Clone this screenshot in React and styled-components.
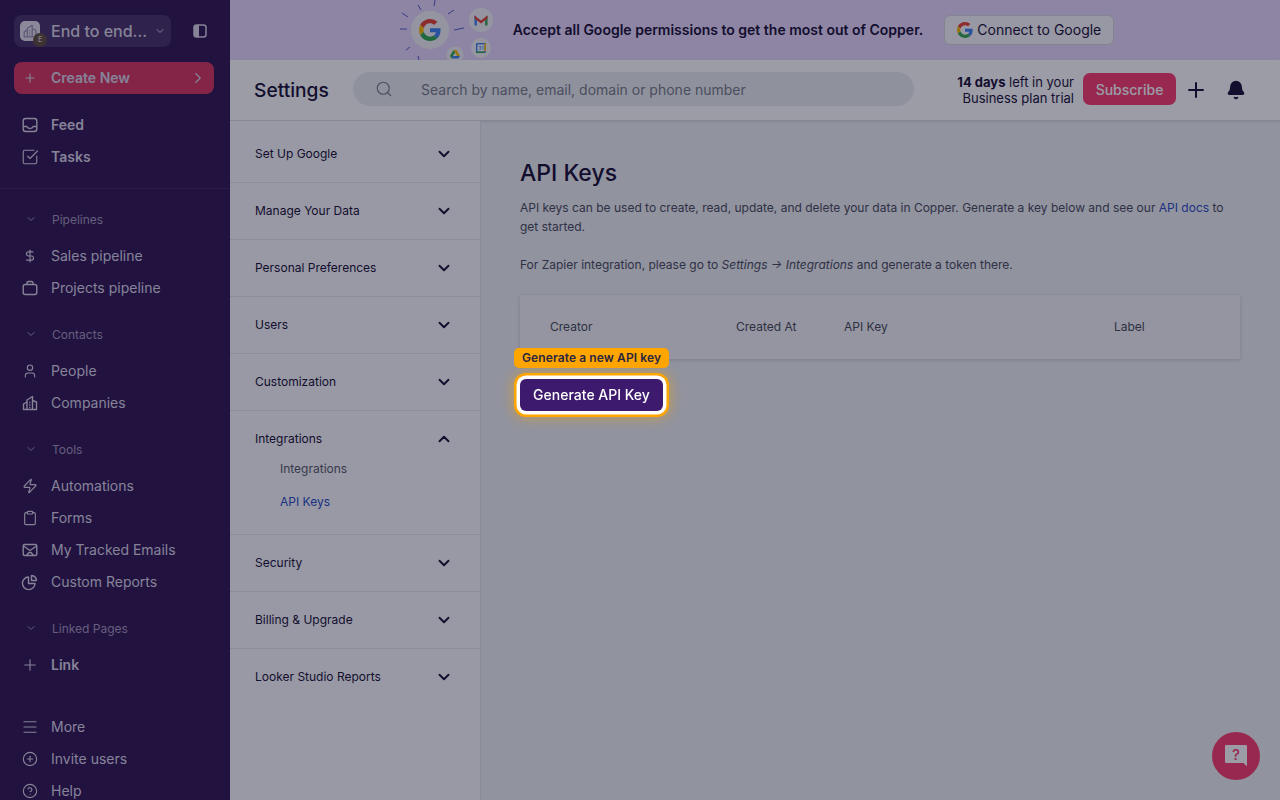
import styled, { createGlobalStyle } from "styled-components";
import {
  Bell,
  ChevronDown,
  ChevronRight,
  ChevronUp,
  CircleHelp,
  CirclePlus,
  Clipboard,
  DollarSign,
  Menu,
  Plus,
  Search,
  SquareCheckBig,
  User,
  Zap,
} from "lucide-react";

const GlobalStyle = createGlobalStyle`
  html, body {
    margin: 0;
    padding: 0;
    height: 100%;
    overflow: hidden;
    font-family: Inter, "Liberation Sans", sans-serif;
  }
  * {
    box-sizing: border-box;
  }
`;

const Page = styled.div`
  display: flex;
  width: 100%;
  height: 100vh;
  overflow: hidden;
  background: #eef0f2;
`;

const Overlay = styled.div`
  position: fixed;
  inset: 0;
  z-index: 10;
  background: rgba(5, 8, 32, 0.4);
`;

const Sidebar = styled.aside`
  flex: 0 0 230px;
  height: 100%;
  overflow: hidden;
  padding-top: 15px;
  background: #351a55;
  color: #dcd6e6;
`;

const OrgRow = styled.div`
  display: flex;
  align-items: center;
  justify-content: space-between;
  padding: 0 23px 0 14px;
`;

const OrgButton = styled.div`
  position: relative;
  display: flex;
  align-items: center;
  width: 157px;
  height: 32px;
  padding: 0 5px 0 6px;
  border-radius: 8px;
  background: #4c3569;
  font-size: 16px;
  font-weight: 500;
`;

const OrgLogo = styled.div`
  display: flex;
  align-items: center;
  justify-content: center;
  flex: 0 0 20px;
  height: 20px;
  margin-right: 11px;
  border-radius: 5px;
  background: #e4e0ea;
  color: #9c8fb0;
`;

const OrgBadge = styled.div`
  position: absolute;
  left: 19px;
  top: 18px;
  width: 14px;
  height: 14px;
  border-radius: 50%;
  background: #62503f;
  color: #d8d0c8;
  font-size: 7px;
  line-height: 14px;
  text-align: center;
`;

const OrgName = styled.span`
  flex: 1;
  white-space: nowrap;
`;

const CreateButton = styled.div`
  display: flex;
  align-items: center;
  height: 32px;
  margin: 15px 16px 0 14px;
  padding: 0 7px 1px 9px;
  border-radius: 8px;
  background: #d93a62;
  font-size: 14px;
  font-weight: 600;
  svg:first-child {
    margin-right: 14px;
  }
  svg:last-child {
    margin-left: auto;
  }
`;

const NavGroup = styled.div`
  margin-top: ${(p) => p.$top || 0}px;
`;

const Divider = styled.div`
  height: 1px;
  margin-top: 15px;
  background: #44296a;
`;

const NavItem = styled.div`
  display: flex;
  align-items: center;
  gap: 12px;
  height: 32px;
  padding: 0 0 2px 21px;
  font-size: 14px;
  font-weight: ${(p) => (p.$bold ? 600 : 400)};
  white-space: nowrap;
`;

const IconSlot = styled.span`
  display: flex;
  align-items: center;
  justify-content: center;
  flex: 0 0 18px;
  height: 18px;
  margin-top: 1px;
`;

const SectionHead = styled.div`
  display: flex;
  align-items: center;
  gap: 15px;
  height: 32px;
  margin-bottom: 5px;
  padding-left: 25px;
  color: #a698ba;
  font-size: 12px;
`;

const Main = styled.div`
  flex: 1;
  display: flex;
  flex-direction: column;
  min-width: 0;
`;

const Banner = styled.div`
  display: flex;
  align-items: center;
  justify-content: center;
  flex: 0 0 60px;
  padding-left: 4px;
  background: #e8d9fa;
  color: #1d1238;
  font-size: 14px;
  font-weight: 600;
  overflow: hidden;
`;

const BannerArt = styled.svg`
  flex: 0 0 113px;
  display: block;
`;

const BannerText = styled.span`
  margin-bottom: 2px;
`;

const ConnectButton = styled.div`
  display: flex;
  align-items: center;
  gap: 4px;
  height: 30px;
  margin-left: 21px;
  padding: 0 12px 1px;
  border: 1px solid #d8d8de;
  border-radius: 6px;
  background: #f9f9fb;
  font-weight: 400;
`;

const Header = styled.header`
  display: flex;
  align-items: center;
  flex: 0 0 61px;
  padding: 0 34px 2px 24px;
  background: #ffffff;
  border-bottom: 1px solid #dcdde2;
  box-shadow: 0 1px 3px rgba(0, 0, 0, 0.08);
  color: #1d1238;
`;

const Title = styled.h2`
  flex: 0 0 99px;
  margin: 2px 0 0;
  font-size: 19.2px;
  font-weight: 500;
`;

const SearchBox = styled.div`
  display: flex;
  align-items: center;
  flex: 0 0 561px;
  height: 34px;
  padding-left: 22px;
  border-radius: 17px;
  background: #eceef1;
  color: #7a7d88;
  font-size: 14px;
  svg {
    margin-right: 28px;
  }
`;

const Trial = styled.div`
  flex: 1;
  margin-top: 2px;
  font-size: 13px;
  line-height: 16px;
  text-align: right;
  b {
    font-weight: 700;
  }
`;

const SubscribeButton = styled.div`
  display: flex;
  align-items: center;
  justify-content: center;
  flex: 0 0 93px;
  height: 32px;
  margin-left: 9px;
  border-radius: 7px;
  background: #fa3f70;
  color: #ffffff;
  font-size: 14px;
  font-weight: 500;
`;

const HeaderIcons = styled.div`
  display: flex;
  align-items: center;
  gap: 18px;
  margin: 2px 0 0 8px;
`;

const Body = styled.div`
  flex: 1;
  display: flex;
  min-height: 0;
`;

const SettingsNav = styled.nav`
  flex: 0 0 251px;
  padding-top: 5px;
  background: #fafafc;
  border-right: 1px solid #e0e1e6;
  color: #1d1238;
`;

const Section = styled.div`
  padding: 0 27px 0 25px;
  border-bottom: ${(p) => (p.$last ? "none" : "1px solid #e6e7ec")};
`;

const SectionRow = styled.div`
  display: flex;
  align-items: center;
  justify-content: space-between;
  height: 56px;
  padding-bottom: 2px;
  font-size: 12px;
  svg {
    margin-top: 2px;
  }
`;

const SubList = styled.div`
  display: flex;
  flex-direction: column;
  gap: 14px;
  margin-top: -8px;
  padding: 0 0 23px 25px;
`;

const SubItem = styled.div`
  height: 19px;
  line-height: 19px;
  font-size: 12px;
  color: ${(p) => (p.$active ? "#2f4fc4" : "#5a5c6b")};
`;

const Content = styled.main`
  flex: 1;
  padding: 36px 40px 0 39px;
`;

const Heading = styled.h1`
  margin: 0 0 9px;
  font-size: 23px;
  line-height: 32px;
  font-weight: 500;
  color: #1d1238;
`;

const Para = styled.p`
  margin: 0 0 19px;
  font-size: 12px;
  line-height: 19px;
  color: #4d4d60;
  a {
    color: #2f4fc4;
  }
`;

const TableCard = styled.div`
  display: grid;
  grid-template-columns: 186px 108px 270px 1fr;
  align-items: center;
  height: 64px;
  margin-top: 21px;
  padding: 0 0 2px 30px;
  background: #f3f4f6;
  box-shadow: 0 1px 4px rgba(0, 0, 0, 0.15);
  color: #4c4e5a;
  font-size: 12px;
`;

const ButtonSpot = styled.div`
  position: relative;
  width: 143px;
  margin-top: 20px;
`;

const Tip = styled.div`
  position: absolute;
  left: -6px;
  top: -31px;
  z-index: 20;
  height: 20px;
  padding: 0 8px;
  border-radius: 5px;
  background: #ffa500;
  color: #2b2640;
  font-size: 12px;
  font-weight: 600;
  letter-spacing: 0.1px;
  line-height: 20px;
  white-space: nowrap;
`;

const GenerateButton = styled.div`
  position: relative;
  z-index: 20;
  display: flex;
  align-items: center;
  justify-content: center;
  height: 32px;
  padding-bottom: 1px;
  border-radius: 6px;
  background: #3e1a6e;
  color: #ffffff;
  font-size: 14px;
  font-weight: 500;
  box-shadow: 0 0 0 3.5px #ffffff, 0 0 0 6px #ffa500, 0 0 12px 8px rgba(255, 165, 0, 0.4);
`;

const HelpBubble = styled.div`
  position: fixed;
  right: 20px;
  bottom: 20px;
  display: flex;
  align-items: center;
  justify-content: center;
  width: 48px;
  height: 48px;
  border-radius: 50%;
  background: #fa3f70;
`;

const gPaths = (
  <>
    <path fill="#EA4335" d="M24 9.5c3.54 0 6.71 1.22 9.21 3.6l6.85-6.85C35.9 2.38 30.47 0 24 0 14.62 0 6.51 5.38 2.56 13.22l7.98 6.19C12.43 13.72 17.74 9.5 24 9.5z" />
    <path fill="#4285F4" d="M46.98 24.55c0-1.57-.15-3.09-.38-4.55H24v9.02h12.94c-.58 2.96-2.26 5.48-4.78 7.18l7.73 6c4.51-4.18 7.09-10.36 7.09-17.65z" />
    <path fill="#FBBC05" d="M10.53 28.59c-.48-1.45-.76-2.99-.76-4.59s.27-3.14.76-4.59l-7.98-6.19C.92 16.46 0 20.12 0 24c0 3.88.92 7.54 2.56 10.78l7.97-6.19z" />
    <path fill="#34A853" d="M24 48c6.48 0 11.93-2.13 15.89-5.81l-7.73-6c-2.15 1.45-4.92 2.3-8.16 2.3-6.26 0-11.57-4.22-13.47-9.91l-7.98 6.19C6.51 42.62 14.62 48 24 48z" />
  </>
);

const rays = [
  [35, 0, 34, 6],
  [18, 5, 21, 10],
  [2, 13, 8, 17],
  [0, 29, 7, 29],
  [6, 50, 10, 47],
  [18, 56, 19, 60],
  [48, 14, 54, 10],
  [54, 30, 64, 28],
];

const BannerIllustration = () => (
  <BannerArt width="113" height="60" viewBox="0 0 113 60">
    {rays.map(([x1, y1, x2, y2], i) => (
      <line key={i} x1={x1} y1={y1} x2={x2} y2={y2} stroke="#5560c8" strokeWidth="1" />
    ))}
    <circle cx="30" cy="30" r="19" fill="#f4f4f6" />
    <svg x="19" y="19" width="22" height="22" viewBox="0 0 48 48">
      {gPaths}
    </svg>
    <circle cx="81" cy="20" r="12" fill="#f4f4f6" />
    <path d="M74.500 25.500v-10l2.400 1.800v8.200z" fill="#4285F4" />
    <path d="M87.500 25.500v-10l-2.400 1.800v8.200z" fill="#34A853" />
    <path d="M74.500 15.500l6.500 5 6.500-5v3l-6.500 5-6.500-5z" fill="#EA4335" />
    <circle cx="81" cy="48" r="10" fill="#f4f4f6" />
    <rect x="76" y="43" width="10" height="10" rx="1" fill="#4285F4" />
    <rect x="77.500" y="44.500" width="7" height="7" fill="#ffffff" />
    <text x="81" y="50" textAnchor="middle" fontSize="5" fontFamily="Inter, sans-serif" fill="#4285F4">31</text>
    <path d="M84.500 43H86v8.500h-1.500z" fill="#FBBC05" />
    <path d="M76 51.500h8.500V53H76z" fill="#34A853" />
    <circle cx="55" cy="55" r="8.500" fill="#f4f4f6" />
    <path d="M53.500 50h3l3.500 6h-3z" fill="#FBBC05" />
    <path d="M53.500 50L50 56l1.500 2.500L55 52.500z" fill="#34A853" />
    <path d="M51.500 58.500h7l1.500-2.500h-7z" fill="#4285F4" />
  </BannerArt>
);

// lucide has no close match for these, so they are drawn by hand
const FeedIcon = () => (
  <svg width="18" height="18" viewBox="0 0 18 18" fill="none" stroke="currentColor" strokeWidth="1.4">
    <rect x="2.200" y="2.500" width="13.600" height="13" rx="2.500" />
    <path d="M2.200 10.500h3.600c.6 1.400 1.700 2 3.200 2s2.600-.6 3.200-2h3.600" />
  </svg>
);

const CaseIcon = () => (
  <svg width="18" height="18" viewBox="0 0 18 18" fill="none" stroke="currentColor" strokeWidth="1.4" strokeLinejoin="round">
    <rect x="2.200" y="5.500" width="13.600" height="10" rx="2" />
    <path d="M6 5.500V4a1.500 1.500 0 0 1 1.500-1.500h3A1.500 1.500 0 0 1 12 4v1.500" />
  </svg>
);

const CompanyIcon = ({ size = 18 }) => (
  <svg width={size} height={size} viewBox="0 0 18 18" fill="none" stroke="currentColor" strokeWidth="1.4" strokeLinejoin="round">
    <path d="M6 15.500V6L11.500 2.500v13" />
    <path d="M6 8L2.500 10v5.500h13V8l-4-1.500" />
    <path d="M8.200 8.500h1.200M8.200 11h1.200M8.200 13.500h1.200" />
  </svg>
);

const TrackedIcon = () => (
  <svg width="18" height="18" viewBox="0 0 18 18" fill="none" stroke="currentColor" strokeWidth="1.4" strokeLinejoin="round">
    <rect x="2.200" y="3.500" width="13.600" height="11" rx="1.500" />
    <path d="M2.500 5L9 9.500 15.500 5" />
    <path d="M5.500 14.500L8 11.500h2l2.500 3" />
  </svg>
);

const PieIcon = () => (
  <svg width="18" height="18" viewBox="0 0 18 18" fill="none" stroke="currentColor" strokeWidth="1.4" strokeLinejoin="round">
    <path d="M7.500 4a6.300 6.300 0 1 0 6.500 6.500H7.500z" />
    <path d="M10.500 2.500a5.500 5.500 0 0 1 5 5h-5z" />
  </svg>
);

const PanelIcon = () => (
  <svg width="14" height="14" viewBox="0 0 14 14">
    <rect x="1" y="1" width="12" height="12" rx="2.500" fill="none" stroke="currentColor" strokeWidth="1.500" />
    <path d="M3.500 1H6v12H3.500A2.500 2.500 0 0 1 1 10.500v-7A2.500 2.500 0 0 1 3.500 1z" fill="currentColor" />
  </svg>
);

const ChatIcon = () => (
  <svg width="24" height="24" viewBox="0 0 24 24">
    <path d="M1 2a1 1 0 0 1 1-1h20a1 1 0 0 1 1 1v20.500l-3.500-3.500H2a1 1 0 0 1-1-1z" fill="#ffffff" />
    <text x="12" y="15.500" textAnchor="middle" fontSize="15" fontWeight="500" fontFamily="Inter, sans-serif" fill="#fa3f70">?</text>
  </svg>
);

const settingsSections = [
  "Set Up Google",
  "Manage Your Data",
  "Personal Preferences",
  "Users",
  "Customization",
];

const lowerSections = ["Security", "Billing & Upgrade"];

const SideLink = ({ icon, bold, children }) => (
  <NavItem $bold={bold}>
    <IconSlot>{icon}</IconSlot>
    {children}
  </NavItem>
);

const SideHead = ({ children }) => (
  <SectionHead>
    <ChevronDown size={12} />
    {children}
  </SectionHead>
);

const App = () => {
  return (
    <Page>
      <GlobalStyle />
      <Sidebar>
        <OrgRow>
          <OrgButton>
            <OrgLogo>
              <CompanyIcon size={16} />
            </OrgLogo>
            <OrgBadge>E</OrgBadge>
            <OrgName>End to end...</OrgName>
            <ChevronDown size={12} />
          </OrgButton>
          <PanelIcon />
        </OrgRow>
        <CreateButton>
          <Plus size={14} />
          Create New
          <ChevronRight size={18} strokeWidth={1.5} />
        </CreateButton>
        <NavGroup $top={15}>
          <SideLink bold icon={<FeedIcon />}>Feed</SideLink>
          <SideLink bold icon={<SquareCheckBig size={18} strokeWidth={1.5} />}>Tasks</SideLink>
        </NavGroup>
        <Divider />
        <NavGroup $top={14}>
          <SideHead>Pipelines</SideHead>
          <SideLink icon={<DollarSign size={14} strokeWidth={2} />}>Sales pipeline</SideLink>
          <SideLink icon={<CaseIcon />}>Projects pipeline</SideLink>
        </NavGroup>
        <NavGroup $top={14}>
          <SideHead>Contacts</SideHead>
          <SideLink icon={<User size={16} strokeWidth={1.7} />}>People</SideLink>
          <SideLink icon={<CompanyIcon />}>Companies</SideLink>
        </NavGroup>
        <NavGroup $top={14}>
          <SideHead>Tools</SideHead>
          <SideLink icon={<Zap size={16} strokeWidth={1.7} />}>Automations</SideLink>
          <SideLink icon={<Clipboard size={16} strokeWidth={1.7} />}>Forms</SideLink>
          <SideLink icon={<TrackedIcon />}>My Tracked Emails</SideLink>
          <SideLink icon={<PieIcon />}>Custom Reports</SideLink>
        </NavGroup>
        <NavGroup $top={14}>
          <SideHead>Linked Pages</SideHead>
          <SideLink bold icon={<Plus size={18} strokeWidth={1.5} />}>Link</SideLink>
        </NavGroup>
        <NavGroup $top={30}>
          <SideLink icon={<Menu size={18} strokeWidth={1.5} />}>More</SideLink>
          <SideLink icon={<CirclePlus size={16} strokeWidth={1.7} />}>Invite users</SideLink>
          <SideLink icon={<CircleHelp size={16} strokeWidth={1.7} />}>Help</SideLink>
        </NavGroup>
      </Sidebar>
      <Main>
        <Banner>
          <BannerIllustration />
          <BannerText>Accept all Google permissions to get the most out of Copper.</BannerText>
          <ConnectButton>
            <svg width="16" height="16" viewBox="0 0 48 48">
              {gPaths}
            </svg>
            Connect to Google
          </ConnectButton>
        </Banner>
        <Header>
          <Title>Settings</Title>
          <SearchBox>
            <Search size={18} strokeWidth={1.5} />
            Search by name, email, domain or phone number
          </SearchBox>
          <Trial>
            <b>14 days</b> left in your
            <br />
            Business plan trial
          </Trial>
          <SubscribeButton>Subscribe</SubscribeButton>
          <HeaderIcons>
            <Plus size={24} strokeWidth={2} />
            <Bell size={20} fill="currentColor" />
          </HeaderIcons>
        </Header>
        <Body>
          <SettingsNav>
            {settingsSections.map((name) => (
              <Section key={name}>
                <SectionRow>
                  {name}
                  <ChevronDown size={18} strokeWidth={2.5} />
                </SectionRow>
              </Section>
            ))}
            <Section>
              <SectionRow>
                Integrations
                <ChevronUp size={18} strokeWidth={2.5} />
              </SectionRow>
              <SubList>
                <SubItem>Integrations</SubItem>
                <SubItem $active>API Keys</SubItem>
              </SubList>
            </Section>
            {lowerSections.map((name) => (
              <Section key={name}>
                <SectionRow>
                  {name}
                  <ChevronDown size={18} strokeWidth={2.5} />
                </SectionRow>
              </Section>
            ))}
            <Section $last>
              <SectionRow>
                Looker Studio Reports
                <ChevronDown size={18} strokeWidth={2.5} />
              </SectionRow>
            </Section>
          </SettingsNav>
          <Content>
            <Heading>API Keys</Heading>
            <Para>
              API keys can be used to create, read, update, and delete your data in Copper. Generate a key below and see our <a>API docs</a> to get started.
            </Para>
            <Para>
              For Zapier integration, please go to <i>Settings → Integrations</i> and generate a token there.
            </Para>
            <TableCard>
              <span>Creator</span>
              <span>Created At</span>
              <span>API Key</span>
              <span>Label</span>
            </TableCard>
            <ButtonSpot>
              <Tip>Generate a new API key</Tip>
              <GenerateButton>Generate API Key</GenerateButton>
            </ButtonSpot>
          </Content>
        </Body>
      </Main>
      <HelpBubble>
        <ChatIcon />
      </HelpBubble>
      <Overlay />
    </Page>
  );
};

export default App;
